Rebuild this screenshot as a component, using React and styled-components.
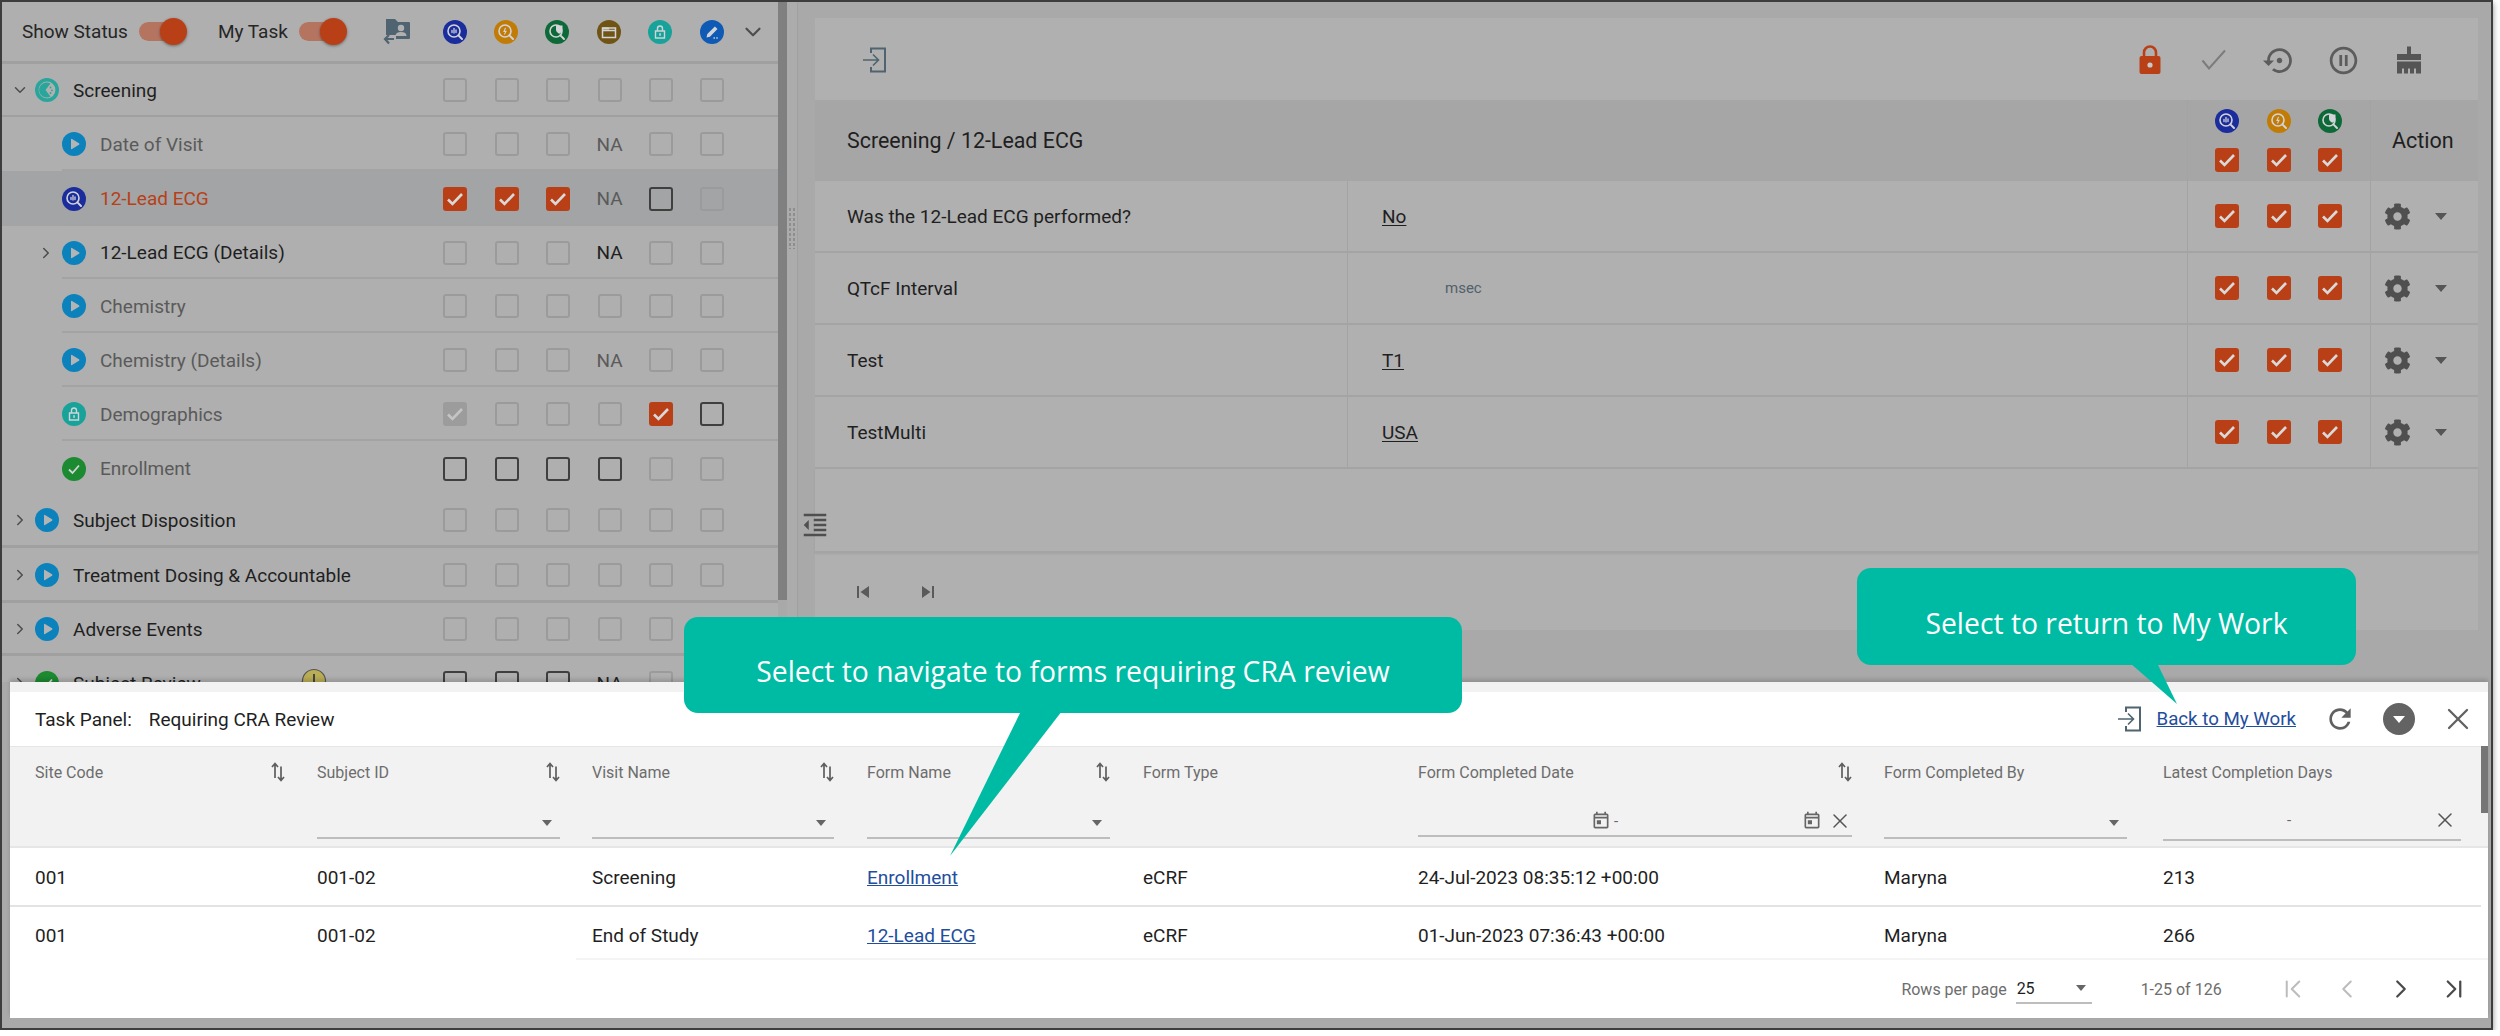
import React from 'react';
import styled, { createGlobalStyle } from 'styled-components';
import { ChevronDown, ChevronRight, ChevronFirst, ChevronLeft, ChevronLast, X } from 'lucide-react';
import {
  MdSettingsBackupRestore, MdOutlinePauseCircle, MdFormatIndentDecrease,
  MdSkipPrevious, MdSkipNext, MdRefresh, MdOutlineToday,
} from 'react-icons/md';
import { FaCog } from 'react-icons/fa';

const ORANGE = '#b94016';
const PANEL = '#b0b0b0';
const LINE = '#a3a3a3';
const LIGHT = '#d2d4d8';

const GlobalStyle = createGlobalStyle`
  html, body { margin: 0; padding: 0; background: #fff; }
  body { font-family: Roboto, "Liberation Sans", sans-serif; }
  * { box-sizing: border-box; }
`;

const Frame = styled.div`
  position: relative;
  width: 2493px;
  height: 1030px;
  border: 2px solid #3d3d3d;
  background: #a9a9a9;
  box-shadow: 0 3px 6px rgba(0, 0, 0, 0.45);
  overflow: hidden;
`;

const Workspace = styled.div`
  display: flex;
  height: 680px;
`;

/* left tree */
const TreePanel = styled.div`
  width: 776px;
  flex: none;
  background: #afafaf;
  overflow: hidden;
`;

const TreeToolbar = styled.div`
  display: flex;
  align-items: center;
  height: 62px;
  padding: 0 0 0 20px;
  border-bottom: 3px solid #a0a0a0;
`;

const ToggleLabel = styled.span`
  font-size: 19px;
  color: #262626;
`;

const Toggle = styled.span`
  position: relative;
  width: 45px;
  height: 19px;
  margin: 0 ${p => p.$after}px 0 11px;
  border-radius: 10px;
  background: #b57460;
  &::after {
    content: '';
    position: absolute;
    right: -3px;
    top: -4px;
    width: 27px;
    height: 27px;
    border-radius: 50%;
    background: ${ORANGE};
    box-shadow: 0 1px 3px rgba(0, 0, 0, 0.4);
  }
`;

const FolderBox = styled.span`
  display: flex;
  width: 46px;
`;

const ColumnGrid = styled.div`
  display: grid;
  grid-template-columns: repeat(6, 51.4px);
  justify-items: center;
  align-items: center;
  flex: none;
`;

const HeadChevron = styled.span`
  display: flex;
  margin-left: 3px;
  color: #4d4d4d;
`;

const TreeRow = styled.div`
  display: flex;
  height: ${p => p.$h}px;
  padding-top: ${p => (p.$root ? p.$rule - 1 : 0)}px;
  background: ${p => (p.$selected ? '#a2a4a6' : 'transparent')};
  border-bottom: ${p => (p.$root ? `${p.$rule}px solid #a0a0a0` : 'none')};
`;

const Gutter = styled.span`
  flex: none;
  width: ${p => (p.$root ? 33 : 60)}px;
  display: flex;
  align-items: center;
  justify-content: flex-end;
  padding-right: ${p => (p.$root ? 6 : 7)}px;
  color: #4d4d4d;
`;

const RowBody = styled.div`
  flex: 1;
  display: flex;
  align-items: center;
  padding-right: 40px;
  padding-top: ${p => (p.$root ? 0 : p.$noLine ? 3 : 2)}px;
  border-bottom: ${p => (p.$root || p.$noLine ? 'none' : '2px solid #a3a3a3')};
`;

const RowLabel = styled.span`
  flex: 1;
  display: flex;
  align-items: center;
  gap: 14px;
  font-size: 19px;
  color: ${p => (p.$selected ? '#b94016' : p.$muted ? '#5a5a5a' : '#1f1f1f')};
`;

const Na = styled.span`
  font-size: 19px;
  color: ${p => (p.$dark ? '#1f1f1f' : '#5a5a5a')};
`;

const Box = styled.span`
  display: flex;
  align-items: center;
  justify-content: center;
  width: 24px;
  height: 24px;
  border-radius: 3px;
  border: ${p => (p.$variant === 'c' || p.$variant === 'g' ? 'none' : p.$variant === 'a' ? '2px solid #3f3f3f' : '2px solid #9b9b9b')};
  background: ${p => (p.$variant === 'c' ? ORANGE : p.$variant === 'g' ? '#9c9c9c' : 'transparent')};
`;

const FlagBox = styled.span`
  display: flex;
  margin-left: 82px;
  margin-top: -2px;
`;

/* scrollbar and splitter */
const TreeScroll = styled.div`
  width: 9px;
  flex: none;
  background: #a9a9a9;
`;

const ScrollThumb = styled.div`
  height: 598px;
  background: #808080;
`;

const Splitter = styled.div`
  width: 11px;
  flex: none;
  display: flex;
  align-items: center;
  justify-content: center;
  border-right: 1px solid #a0a0a0;
  background: #acacac;
`;

const Grip = styled.div`
  width: 8px;
  height: 42px;
  margin-top: -228px;
  background-image: radial-gradient(#8e8e8e 1px, transparent 1.4px);
  background-size: 4px 5px;
`;

/* right form */
const FormArea = styled.div`
  position: relative;
  flex: 1;
  padding: 16px 13px 0 17px;
`;

const FormPanel = styled.div`
  display: flex;
  flex-direction: column;
  height: 612px;
  background: ${PANEL};
`;

const FormToolbar = styled.div`
  display: flex;
  align-items: center;
  height: 82px;
  padding: 2px 37px 0 48px;
`;

const ActionIcons = styled.div`
  display: grid;
  grid-template-columns: repeat(5, 64.75px);
  justify-items: center;
  align-items: center;
  margin-left: auto;
`;

const FormGrid = styled.div`
  display: grid;
  grid-template-columns: 532px 840px 183px 108px;
  height: ${p => p.$h}px;
  background: ${p => (p.$head ? '#a6a6a6' : 'transparent')};
  border-bottom: ${p => (p.$head ? 'none' : '2px solid #a4a4a4')};
`;

const FormCell = styled.div`
  display: flex;
  align-items: center;
  grid-column: ${p => (p.$wide ? 'span 2' : 'auto')};
  font-size: ${p => p.$size || 19}px;
  color: #1f1f1f;
  padding-left: ${p => p.$pad || 0}px;
  border-left: ${p => (p.$rule ? `1px solid ${LINE}` : 'none')};
`;

const FormValue = styled.span`
  text-decoration: underline;
  text-underline-offset: 2px;
`;

const Unit = styled.span`
  margin-left: 63px;
  font-size: 15px;
  color: #52616b;
`;

const ReviewStack = styled.div`
  display: flex;
  flex-direction: column;
  gap: 15px;
`;

const ReviewLine = styled.div`
  display: flex;
  gap: 27.5px;
`;

const GearCaret = styled.div`
  display: flex;
  align-items: center;
  gap: 24px;
  color: #4f4f4f;
`;

const Caret = styled.span`
  width: 0;
  height: 0;
  border-left: ${p => p.$size}px solid transparent;
  border-right: ${p => p.$size}px solid transparent;
  border-top: ${p => p.$size + 1}px solid ${p => p.$color || '#555'};
`;

const FormSpacer = styled.div`
  flex: 1;
  border-bottom: 2px solid #a4a4a4;
  box-shadow: 0 1px 2px rgba(0, 0, 0, 0.08);
`;

const CollapseTool = styled.span`
  position: absolute;
  left: 2px;
  top: 508px;
  display: flex;
  color: #4f4f4f;
`;

const FormPager = styled.div`
  display: flex;
  align-items: center;
  gap: 41px;
  height: 77px;
  padding: 0 0 0 36px;
  color: #5a5a5a;
`;

/* task panel */
const TaskPanel = styled.section`
  position: relative;
  height: 336px;
  margin: 0 3px 0 8px;
  padding-top: 10px;
  background: linear-gradient(#f2f2f2 10px, #fff 10px);
  box-shadow: 0 -3px 4px rgba(0, 0, 0, 0.14);
`;

const TaskTitleBar = styled.div`
  display: flex;
  align-items: center;
  height: 54px;
  padding: 0 12px 0 25px;
  font-size: 19px;
  color: #1f1f1f;
`;

const TaskTitle = styled.span`
  margin-right: 17px;
`;

const TaskTools = styled.div`
  display: flex;
  align-items: center;
  margin-left: auto;
  color: #616161;
`;

const BackLink = styled.a`
  margin: 0 28px 0 15px;
  font-size: 18.7px;
  color: #1f4e9e;
  text-decoration: underline;
`;

const RoundCaret = styled.span`
  display: flex;
  align-items: center;
  justify-content: center;
  width: 32px;
  height: 32px;
  margin: 0 25px 0 27px;
  border-radius: 50%;
  background: #636363;
`;

const TaskGrid = styled.div`
  display: grid;
  grid-template-columns: 282px 275px 275px 276px 275px 466px 279px 1fr;
  padding-left: 25px;
`;

const TaskHead = styled(TaskGrid)`
  height: 102px;
  background: #f2f2f2;
  border-top: 1px solid #e6e6e6;
  border-bottom: 2px solid #e6e6e6;
`;

const HeadCell = styled.div`
  display: flex;
  flex-direction: column;
  padding-right: ${p => p.$padR}px;
  padding-top: 15px;
  font-size: 16px;
  color: #6d6d6d;
`;

const HeadLabel = styled.div`
  display: flex;
  align-items: center;
  justify-content: space-between;
  height: 20px;
`;

const Filter = styled.div`
  display: flex;
  align-items: center;
  height: 34px;
  margin-top: auto;
  margin-bottom: ${p => p.$bottom}px;
  padding: ${p => p.$padding};
  justify-content: ${p => p.$justify || 'flex-end'};
  border-bottom: 2px solid #bdbdbd;
  color: #666;
`;

const Dash = styled.span`
  margin: ${p => p.$margin};
  font-size: 15px;
  color: #666;
`;

const ClearIcon = styled.span`
  display: flex;
  margin-left: ${p => p.$left};
  color: #555;
`;

const TaskRow = styled(TaskGrid)`
  height: ${p => p.$h}px;
  align-items: center;
  padding-top: ${p => p.$top}px;
  font-size: 19px;
  color: #1f1f1f;
  border-bottom: ${p => (p.$rule ? '2px solid #e3e3e3' : 'none')};
  margin-right: ${p => (p.$rule ? 7 : 0)}px;
`;

const FormLink = styled.a`
  color: #1f4e9e;
  text-decoration: underline;
`;

const RowEdge = styled.div`
  height: 2px;
  margin-left: 566px;
  background: #f4f4f4;
`;

const TaskScroll = styled.div`
  position: absolute;
  right: 0;
  top: 64px;
  width: 7px;
  height: 67px;
  background: #767676;
`;

const Pager = styled.div`
  display: flex;
  align-items: center;
  justify-content: flex-end;
  height: 58px;
  padding-right: 21px;
  font-size: 16px;
  color: #6d6d6d;
`;

const PageSize = styled.div`
  display: flex;
  align-items: center;
  justify-content: space-between;
  width: 76px;
  height: 30px;
  margin: 0 49px 0 9px;
  padding: 0 6px 0 1px;
  border-bottom: 2px solid #bdbdbd;
  color: #1f1f1f;
`;

const PageButtons = styled.div`
  display: grid;
  grid-template-columns: repeat(4, 53.6px);
  justify-items: center;
  margin-left: 45px;
  margin-right: -14px;
`;

const PageIcon = styled.span`
  display: flex;
  color: ${p => (p.$off ? '#bcbcbc' : '#4a4a4a')};
`;

/* callouts */
const Callout = styled.div`
  position: absolute;
  left: ${p => p.$x - 2}px;
  top: ${p => p.$y - 2}px;
  width: ${p => p.$w}px;
  height: ${p => p.$h}px;
  display: flex;
  align-items: center;
  justify-content: center;
  padding-top: 12px;
  border-radius: 14px;
  background: #00bba3;
  color: #fff;
  font-family: "Open Sans", "Noto Sans", sans-serif;
  font-size: 28.3px;
  z-index: 5;
`;

const CalloutTail = styled.svg`
  position: absolute;
  left: 0;
  top: 0;
  overflow: visible;
  pointer-events: none;
`;

/* drawn icons */
const Dot = ({ color, children }) => (
  <svg width="24" height="24" viewBox="0 0 24 24" style={{ flex: 'none', display: 'block' }}>
    <circle cx="12" cy="12" r="12" fill={color} />
    {children}
  </svg>
);

const Lens = ({ children }) => (
  <g fill="none" stroke={LIGHT} strokeWidth="1.6" strokeLinecap="round">
    <circle cx="11" cy="11" r="6" />
    <path d="M15.4 15.4 L19 19" strokeWidth="2" />
    {children}
  </g>
);

const ReviewIcon = () => (
  <Dot color="#1b2c9c"><Lens><path d="M9 12.5v-2M11 13v-4.5M13 12.5v-2.5" strokeWidth="1.3" /></Lens></Dot>
);
const SdvIcon = () => (
  <Dot color="#c27c06"><Lens><path d="M11.4 8.2 L10 11.4 H12 L10.6 14" strokeWidth="1.1" /></Lens></Dot>
);
const DmIcon = () => (
  <Dot color="#0d6a38">
    <Lens />
    <path d="M11 5.5 h6.5 v4 c0 2 -1.5 3.5 -3.2 4.2 c-1.8 -0.7 -3.3 -2.2 -3.3 -4.2z" fill={LIGHT} />
  </Dot>
);
const FolderDot = () => (
  <Dot color="#6f5414">
    <path d="M5.5 8 h13 v9.5 h-13z M5.5 10.6 h13" fill="none" stroke={LIGHT} strokeWidth="1.5" />
    <path d="M5.5 7.5 h6 l1 2 h-7z" fill={LIGHT} />
  </Dot>
);
const LockDot = () => (
  <Dot color="#17a399">
    <path d="M7.5 11 h9 v7 h-9z" fill="none" stroke={LIGHT} strokeWidth="1.4" />
    <path d="M9.5 11 v-2.5 a2.5 2.5 0 0 1 5 0 v2.5" fill="none" stroke={LIGHT} strokeWidth="1.4" />
    <rect x="11.3" y="13.2" width="1.5" height="2.6" fill={LIGHT} />
  </Dot>
);
const PencilDot = () => (
  <Dot color="#0e5ab4">
    <path d="M6.5 17.5 l0.8 -3.4 l7.6 -7.6 l2.6 2.6 l-7.6 7.6z" fill={LIGHT} />
    <path d="M13.5 18 h5" stroke={LIGHT} strokeWidth="1.5" strokeDasharray="1.4 1.4" />
  </Dot>
);
const PlayIcon = () => (
  <Dot color="#0b82bb">
    <path d="M9 7.5 Q9 6.3 10 6.9 L17 11.2 Q18 12 17 12.8 L10 17.1 Q9 17.7 9 16.5z" fill="#b4b4b4" />
  </Dot>
);
const ProgressIcon = () => (
  <Dot color="#28a69b">
    <circle cx="12" cy="12" r="8.4" fill="#b0b0b0" />
    <path d="M15.5 5.4 A7.6 7.6 0 1 0 15.5 18.6 L10.5 12z" fill="#28a69b" />
    <circle cx="15.5" cy="9.5" r="0.9" fill="#28a69b" />
    <circle cx="17" cy="12.3" r="0.9" fill="#28a69b" />
    <circle cx="15.5" cy="15" r="0.9" fill="#28a69b" />
  </Dot>
);
const DoneIcon = () => (
  <Dot color="#1c8a30">
    <path d="M7 12.5 l3.5 3.5 l6.5 -7.5" fill="none" stroke={LIGHT} strokeWidth="1.8" />
  </Dot>
);

const Tick = ({ color }) => (
  <svg width="20" height="20" viewBox="0 0 20 20">
    <path d="M3 10.5 l4.5 4.5 l9.5 -10" fill="none" stroke={color} strokeWidth="2.6" />
  </svg>
);

const FolderUser = () => (
  <svg width="28" height="27" viewBox="0 0 28 27">
    <path d="M3 1 h9 l3 3 h11 a1 1 0 0 1 1 1 v15 a1 1 0 0 1 -1 1 h-13 v-4 h-10z" fill="#4f6470" />
    <circle cx="18" cy="10" r="3.2" fill="#b0b0b0" />
    <path d="M12.5 18 q0 -4 5.5 -4 q5.5 0 5.5 4z" fill="#b0b0b0" />
    <path d="M11 21 H2 M6 17 l-4 4 l4 4.5" fill="none" stroke="#4f6470" strokeWidth="2.2" />
  </svg>
);

const EnterIcon = ({ color }) => (
  <svg width="24" height="26" viewBox="0 0 24 26">
    <path d="M8 6 V1.5 H22 V24.5 H8 V20" fill="none" stroke={color} strokeWidth="2" />
    <path d="M0 13 H15 M10 7.5 L15.5 13 L10 18.5" fill="none" stroke={color} strokeWidth="1.6" />
  </svg>
);

const RedLock = () => (
  <svg width="24" height="30" viewBox="0 0 24 30">
    <path d="M6 12 V7.5 a6 6 0 0 1 12 0 V12" fill="none" stroke={ORANGE} strokeWidth="2.6" />
    <rect x="1.5" y="11" width="21" height="18" rx="2" fill={ORANGE} />
    <circle cx="12" cy="20" r="2.6" fill="#c9c9c9" />
  </svg>
);

const ThinCheck = () => (
  <svg width="26" height="22" viewBox="0 0 26 22">
    <path d="M1.5 11.5 L8 19.5 L24 1.5" fill="none" stroke="#7c7c7c" strokeWidth="2" />
  </svg>
);

const Brush = () => (
  <svg width="26" height="28" viewBox="0 0 26 28">
    <path d="M11 0.5 h4 v8 h-4z" fill="#555" />
    <path d="M1 8 h24 v6 h-24z" fill="#555" />
    <path d="M1 15.5 h24 v12 h-5 v-5 h-2 v5 h-4 v-5 h-2 v5 h-4 v-5 h-2 v5 h-5z" fill="#555" />
  </svg>
);

const SortArrows = () => (
  <svg width="14" height="20" viewBox="0 0 14 20" style={{ flex: 'none' }}>
    <path d="M4 16 V1.5 M1 5 L4 1.5 L7 5" fill="none" stroke="#5e5e5e" strokeWidth="1.7" />
    <path d="M10 4.5 V18.5 M7 15 L10 18.5 L13 15" fill="none" stroke="#5e5e5e" strokeWidth="1.7" />
  </svg>
);

const ClockLeaf = () => (
  <svg width="30" height="28" viewBox="0 0 30 28" style={{ flex: 'none', display: 'block' }}>
    <path d="M1 22 Q4 12 13 11" fill="none" stroke="#4d9a1e" strokeWidth="2.4" />
    <circle cx="17" cy="13" r="11.5" fill="#b9ad55" stroke="#555" strokeWidth="1.2" />
    <path d="M17 6 V14" stroke="#444" strokeWidth="2" />
  </svg>
);

const Check = ({ v }) => {
  if (v === 'n' || v === 'N') return <Na $dark={v === 'N'}>NA</Na>;
  return (
    <Box $variant={v}>
      {v === 'c' && <Tick color="#d9d9d9" />}
      {v === 'g' && <Tick color="#c4c4c4" />}
    </Box>
  );
};

const treeRows = [
  { label: 'Screening', icon: <ProgressIcon />, root: true, open: true, h: 53, rule: 2, checks: 'dddddd' },
  { label: 'Date of Visit', icon: <PlayIcon />, muted: true, h: 54, checks: 'dddndd' },
  { label: '12-Lead ECG', icon: <ReviewIcon />, selected: true, h: 55, checks: 'cccnad' },
  { label: '12-Lead ECG (Details)', icon: <PlayIcon />, expand: true, h: 53, checks: 'dddNdd' },
  { label: 'Chemistry', icon: <PlayIcon />, muted: true, h: 54, checks: 'dddddd' },
  { label: 'Chemistry (Details)', icon: <PlayIcon />, muted: true, h: 54, checks: 'dddndd' },
  { label: 'Demographics', icon: <LockDot />, muted: true, h: 54, checks: 'gdddca' },
  { label: 'Enrollment', icon: <DoneIcon />, muted: true, h: 52, noLine: true, checks: 'aaaadd' },
  { label: 'Subject Disposition', icon: <PlayIcon />, root: true, expand: true, h: 55, rule: 3, checks: 'dddddd' },
  { label: 'Treatment Dosing & Accountable', icon: <PlayIcon />, root: true, expand: true, h: 55, rule: 3, checks: 'dddddd' },
  { label: 'Adverse Events', icon: <PlayIcon />, root: true, expand: true, h: 53, rule: 3, checks: 'dddddd' },
  { label: 'Subject Review', icon: <DoneIcon />, root: true, expand: true, h: 55, rule: 3, checks: 'aaaNdd', flag: true },
];

const formRows = [
  { label: 'Was the 12-Lead ECG performed?', value: 'No' },
  { label: 'QTcF Interval', unit: 'msec' },
  { label: 'Test', value: 'T1' },
  { label: 'TestMulti', value: 'USA' },
];

const taskRows = [
  { visit: 'Screening', form: 'Enrollment', date: '24-Jul-2023 08:35:12 +00:00', days: '213', h: 59, top: 2, rule: true },
  { visit: 'End of Study', form: '12-Lead ECG', date: '01-Jun-2023 07:36:43 +00:00', days: '266', h: 51, top: 6 },
];

const TriChecks = () => (
  <ReviewLine>
    <Check v="c" />
    <Check v="c" />
    <Check v="c" />
  </ReviewLine>
);

const SelectFilter = () => (
  <Filter $bottom={7} $padding="3px 8px 0 0">
    <Caret $size={5} $color="#666" />
  </Filter>
);

export default function App() {
  return (
    <>
      <GlobalStyle />
      <Frame>
        <Workspace>
          <TreePanel>
            <TreeToolbar>
              <ToggleLabel>Show Status</ToggleLabel>
              <Toggle $after={34} />
              <ToggleLabel>My Task</ToggleLabel>
              <Toggle $after={39} />
              <FolderBox><FolderUser /></FolderBox>
              <ColumnGrid>
                <ReviewIcon />
                <SdvIcon />
                <DmIcon />
                <FolderDot />
                <LockDot />
                <PencilDot />
              </ColumnGrid>
              <HeadChevron><ChevronDown size={26} strokeWidth={2} /></HeadChevron>
            </TreeToolbar>
            {treeRows.map(row => (
              <TreeRow key={row.label} $h={row.h} $root={row.root} $rule={row.rule} $selected={row.selected}>
                <Gutter $root={row.root}>
                  {row.open && <ChevronDown size={18} />}
                  {row.expand && <ChevronRight size={18} />}
                </Gutter>
                <RowBody $root={row.root} $noLine={row.noLine}>
                  <RowLabel $muted={row.muted} $selected={row.selected}>
                    {row.icon}
                    {row.label}
                    {row.flag && <FlagBox><ClockLeaf /></FlagBox>}
                  </RowLabel>
                  <ColumnGrid>
                    {row.checks.split('').map((v, i) => <Check key={i} v={v} />)}
                  </ColumnGrid>
                </RowBody>
              </TreeRow>
            ))}
          </TreePanel>
          <TreeScroll><ScrollThumb /></TreeScroll>
          <Splitter><Grip /></Splitter>
          <FormArea>
            <FormPanel>
              <FormToolbar>
                <EnterIcon color="#4f6470" />
                <ActionIcons>
                  <RedLock />
                  <ThinCheck />
                  <MdSettingsBackupRestore size={33} color="#5c5c5c" />
                  <MdOutlinePauseCircle size={33} color="#5c5c5c" />
                  <Brush />
                </ActionIcons>
              </FormToolbar>
              <FormGrid $head $h={81}>
                <FormCell $wide $size={21.4} $pad={32}>Screening / 12-Lead ECG</FormCell>
                <FormCell $rule $pad={27}>
                  <ReviewStack>
                    <ReviewLine><ReviewIcon /><SdvIcon /><DmIcon /></ReviewLine>
                    <TriChecks />
                  </ReviewStack>
                </FormCell>
                <FormCell $size={21.5} $rule $pad={21}>Action</FormCell>
              </FormGrid>
              {formRows.map(row => (
                <FormGrid key={row.label} $h={72}>
                  <FormCell $pad={32}>{row.label}</FormCell>
                  <FormCell $rule $pad={34}>
                    {row.value && <FormValue>{row.value}</FormValue>}
                    {row.unit && <Unit>{row.unit}</Unit>}
                  </FormCell>
                  <FormCell $rule $pad={27}><TriChecks /></FormCell>
                  <FormCell $rule $pad={13}>
                    <GearCaret>
                      <FaCog size={27} />
                      <Caret $size={6} />
                    </GearCaret>
                  </FormCell>
                </FormGrid>
              ))}
              <FormSpacer />
              <FormPager>
                <MdSkipPrevious size={24} />
                <MdSkipNext size={24} />
              </FormPager>
            </FormPanel>
            <CollapseTool><MdFormatIndentDecrease size={30} /></CollapseTool>
          </FormArea>
        </Workspace>

        <TaskPanel>
          <TaskTitleBar>
            <TaskTitle>Task Panel:</TaskTitle>
            Requiring CRA Review
            <TaskTools>
              <EnterIcon color="#4f6470" />
              <BackLink>Back to My Work</BackLink>
              <MdRefresh size={32} />
              <RoundCaret><Caret $size={6} $color="#fff" /></RoundCaret>
              <X size={36} strokeWidth={1.5} />
            </TaskTools>
          </TaskTitleBar>
          <TaskHead>
            <HeadCell $padR={32}><HeadLabel>Site Code<SortArrows /></HeadLabel></HeadCell>
            <HeadCell $padR={32}><HeadLabel>Subject ID<SortArrows /></HeadLabel><SelectFilter /></HeadCell>
            <HeadCell $padR={33}><HeadLabel>Visit Name<SortArrows /></HeadLabel><SelectFilter /></HeadCell>
            <HeadCell $padR={33}><HeadLabel>Form Name<SortArrows /></HeadLabel><SelectFilter /></HeadCell>
            <HeadCell $padR={32}><HeadLabel>Form Type</HeadLabel></HeadCell>
            <HeadCell $padR={32}>
              <HeadLabel>Form Completed Date<SortArrows /></HeadLabel>
              <Filter $bottom={9} $justify="flex-start" $padding="3px 0 0 173px">
                <MdOutlineToday size={20} />
                <Dash $margin="0 0 0 3px">-</Dash>
                <MdOutlineToday size={20} style={{ marginLeft: 'auto' }} />
                <ClearIcon $left="6px"><X size={24} strokeWidth={1.5} /></ClearIcon>
              </Filter>
            </HeadCell>
            <HeadCell $padR={36}><HeadLabel>Form Completed By</HeadLabel><SelectFilter /></HeadCell>
            <HeadCell $padR={27}>
              <HeadLabel>Latest Completion Days</HeadLabel>
              <Filter $bottom={5} $justify="flex-start" $padding="0 4px 6px 124px">
                <Dash $margin="0">-</Dash>
                <ClearIcon $left="auto"><X size={24} strokeWidth={1.5} /></ClearIcon>
              </Filter>
            </HeadCell>
          </TaskHead>
          {taskRows.map(row => (
            <TaskRow key={row.form} $h={row.h} $top={row.top} $rule={row.rule}>
              <span>001</span>
              <span>001-02</span>
              <span>{row.visit}</span>
              <span><FormLink>{row.form}</FormLink></span>
              <span>eCRF</span>
              <span>{row.date}</span>
              <span>Maryna</span>
              <span>{row.days}</span>
            </TaskRow>
          ))}
          <RowEdge />
          <Pager>
            Rows per page
            <PageSize>25<Caret $size={5} $color="#666" /></PageSize>
            1-25 of 126
            <PageButtons>
              <PageIcon $off><ChevronFirst size={30} strokeWidth={1.6} /></PageIcon>
              <PageIcon $off><ChevronLeft size={30} strokeWidth={1.6} /></PageIcon>
              <PageIcon><ChevronRight size={30} strokeWidth={1.8} /></PageIcon>
              <PageIcon><ChevronLast size={30} strokeWidth={1.8} /></PageIcon>
            </PageButtons>
          </Pager>
          <TaskScroll />
        </TaskPanel>

        <Callout $x={684} $y={617} $w={778} $h={96}>
          Select to navigate to forms requiring CRA review
          <CalloutTail width="1" height="1">
            <polygon points="337,94 378,94 266,239" fill="#00bba3" />
          </CalloutTail>
        </Callout>
        <Callout $x={1857} $y={568} $w={499} $h={97}>
          Select to return to My Work
          <CalloutTail width="1" height="1">
            <polygon points="273,95 300,95 320,136" fill="#00bba3" />
          </CalloutTail>
        </Callout>
      </Frame>
    </>
  );
}
